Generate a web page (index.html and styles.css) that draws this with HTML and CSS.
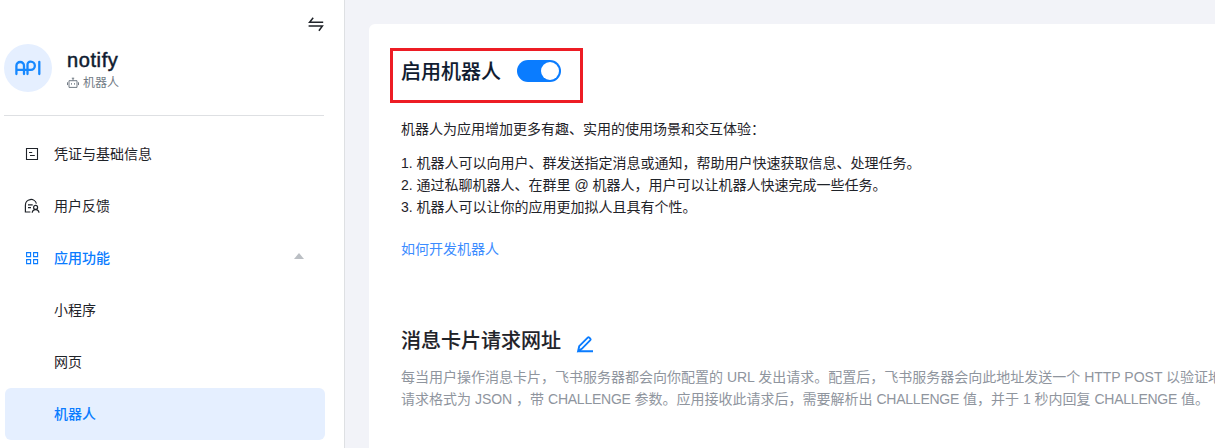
FILE: index.html
```html
<!DOCTYPE html>
<html lang="zh-CN">
<head>
<meta charset="utf-8">
<title>机器人</title>
<link rel="stylesheet" href="styles.css">
</head>
<body>
<div class="layout">
  <aside class="sidebar">
    <div class="toolbar">
      <svg class="switch-icon" width="16" height="16" viewBox="0 0 16 16"><path d="M15.200 6.200H1.600L5.200 1.700M.6 9.900h13.800L10.900 14.700"/></svg>
    </div>
    <div class="app">
      <div class="avatar">
        <svg width="26" height="16" viewBox="0 0 26 16"><path d="M1.400 14V5.800a3.800 3.800 0 0 1 7.600 0V14M1.400 9.800H15.800a4 4 0 0 0 0-8.100h-.4a2.900 2.900 0 0 0-2.900 2.900V14M24.300 1.800V14"/></svg>
      </div>
      <div class="app-info">
        <div class="app-name">notify</div>
        <div class="app-type">
          <svg width="12" height="12" viewBox="0 0 12 12"><path d="M2 3.700h8v6.700H2zM6 3.500V1M4.800 1.200h2.400M.5 5.300v2.800M11.500 5.300v2.800M4.500 6.200v1.400M7.500 6.200v1.400"/></svg>
          <span>机器人</span>
        </div>
      </div>
    </div>
    <nav class="menu">
      <a class="item">
        <svg class="icon" width="16" height="16" viewBox="0 0 16 16"><path d="M2.500 2.500h11v11h-11zM5 6.500h3.200M6 9.500h4.800"/></svg>
        <span>凭证与基础信息</span>
      </a>
      <a class="item">
        <svg class="icon feedback" width="16" height="16" viewBox="0 0 16 16"><path d="M6.400 14H1.400V7.200a5.600 5.600 0 0 1 11-1.600M4 6.900h4.700M4 9.700h3"/><circle cx="11.600" cy="9.400" r="2"/><path d="M8.200 14.800c.2-2 1.300-3.200 3.400-3.200s3.200 1.200 3.400 3.200"/></svg>
        <span>用户反馈</span>
      </a>
      <a class="item active">
        <svg class="icon" width="16" height="16" viewBox="0 0 16 16"><path d="M2.600 2.600h4v4h-4zM9.600 2.600h4v4h-4zM2.600 9.600h4v4h-4zM9.600 9.600h4v4h-4z"/></svg>
        <span>应用功能</span>
        <i class="caret"></i>
      </a>
      <a class="item sub">小程序</a>
      <a class="item sub">网页</a>
      <a class="item sub active selected">机器人</a>
    </nav>
  </aside>
  <main class="content">
    <section class="card">
      <div class="enable">
        <h2 class="title navy">启用机器人</h2>
        <span class="toggle"></span>
      </div>
      <p class="intro">机器人为应用增加更多有趣、实用的使用场景和交互体验：</p>
      <div class="features">
        <p>1. 机器人可以向用户、群发送指定消息或通知，帮助用户快速获取信息、处理任务。</p>
        <p>2. 通过私聊机器人、在群里 @ 机器人，用户可以让机器人快速完成一些任务。</p>
        <p>3. 机器人可以让你的应用更加拟人且具有个性。</p>
      </div>
      <a class="link">如何开发机器人</a>
      <div class="heading">
        <h2 class="title">消息卡片请求网址</h2>
        <svg class="edit" width="18" height="18" viewBox="0 0 18 18"><path d="M2.200 15.800l1-4.600 8.500-8.600q.8-.7 1.600 0l1 1q.7.800 0 1.600l-8.500 8.600zM1.800 16.200H17"/></svg>
      </div>
      <div class="hint">
        <p>每当用户操作消息卡片，飞书服务器都会向你配置的 URL 发出请求。配置后，飞书服务器会向此地址发送一个 HTTP POST 以验证地</p>
        <p>请求格式为 JSON ，带 <span class="param">CHALLENGE</span> 参数。应用接收此请求后，需要解析出 <span class="param">CHALLENGE</span> 值，并于 1 秒内回复 <span class="param">CHALLENGE</span> 值。</p>
      </div>
    </section>
  </main>
</div>
</body>
</html>
```
FILE: styles.css
```css
* { box-sizing: border-box; }
body {
  margin: 0;
  height: 448px;
  overflow: hidden;
  background: #f2f3f8;
  color: #1f2329;
  font: 14px/22px "Liberation Sans", "Noto Sans CJK SC", sans-serif;
}
p, h2 { margin: 0; }
svg { display: block; flex: none; fill: none; stroke: currentColor; }
.layout { display: flex; height: 448px; }
.sidebar {
  flex: none;
  width: 345px;
  background: #fff;
  border-right: 1px solid #dee0e3;
}
.toolbar {
  display: flex;
  justify-content: flex-end;
  height: 44px;
  padding: 16px 20px 0 0;
}
.switch-icon { stroke-width: 1.5; }
.app {
  display: flex;
  gap: 15px;
  width: 320px;
  height: 72px;
  margin-left: 4px;
  border-bottom: 1px solid #dee0e3;
}
.avatar {
  display: flex;
  align-items: center;
  justify-content: center;
  width: 48px;
  height: 48px;
  border-radius: 50%;
  background: #e5efff;
  color: #1688ff;
}
.avatar svg { stroke-width: 2.3; stroke-linecap: round; }
.app-info { padding-top: 4px; }
.app-name {
  font-size: 20px;
  line-height: 25px;
  letter-spacing: .6px;
  color: #0f1b30;
  -webkit-text-stroke: .5px currentColor;
}
.app-type {
  display: flex;
  align-items: center;
  gap: 4px;
  font-size: 12px;
  line-height: 20px;
  color: #727b85;
}
.menu { padding: 12px 0 0 5px; }
.item {
  display: flex;
  align-items: center;
  width: 320px;
  height: 52px;
  padding-left: 19px;
}
.icon { margin-right: 14px; stroke-width: 1.1; }
.feedback { stroke-width: 1.2; }
.sub { padding-left: 49px; }
.active { color: #0a7cff; font-weight: 500; }
.selected { background: #e5efff; border-radius: 6px; }
.caret {
  margin: 0 21px 5px auto;
  border: 5px solid transparent;
  border-top: 0;
  border-bottom: 6px solid #bbbfc4;
}
.content { flex: 1; min-width: 0; padding: 24px 0 0 24px; }
.card {
  height: 424px;
  padding: 24px 0 0 21px;
  overflow: hidden;
  background: #fff;
  border-top-left-radius: 6px;
}
.enable {
  display: flex;
  align-items: flex-start;
  gap: 16px;
  width: 193px;
  height: 55px;
  padding: 7px 0 0 8px;
  border: 3px solid #ed1c24;
}
.title {
  font-size: 20px;
  line-height: 28px;
  font-weight: 500;
  -webkit-text-stroke: .1px currentColor;
}
.navy { color: #0f1b30; }
.toggle {
  width: 44px;
  height: 22px;
  margin-top: 2px;
  padding: 2px;
  border-radius: 11px;
  background: #0a7cff;
}
.toggle::after {
  content: "";
  display: block;
  width: 18px;
  height: 18px;
  margin-left: auto;
  border-radius: 50%;
  background: #fff;
}
.intro { padding: 15px 0 0 11px; }
.features { padding: 12px 0 0 11px; }
.link { display: block; padding: 20px 0 0 11px; color: #3c8cff; }
.heading { display: flex; gap: 15px; padding: 67px 0 0 11px; }
.edit { margin-top: 8px; color: #0a7cff; stroke-width: 1.9; }
.hint { padding: 11px 0 0 11px; color: #8f959e; white-space: nowrap; }
.param { letter-spacing: -.24px; }
```
